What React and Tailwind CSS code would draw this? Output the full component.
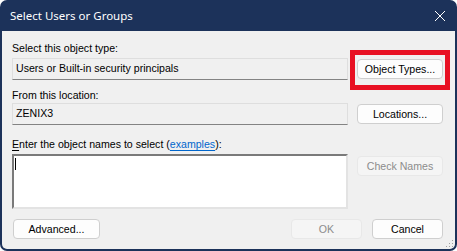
import React from "react";

const sans = '"Liberation Sans", Arial, sans-serif';

const btn =
  "h-[20px] rounded-[4px] border border-[#cfcfcf] bg-[#fdfdfd] text-[10.6px] leading-none text-black flex items-center justify-center";
const btnDisabled =
  "h-[20px] rounded-[4px] border border-[#e8e8e8] bg-[#f5f5f5] text-[10.6px] leading-none text-[#8c8c8c] flex items-center justify-center";
const roBox =
  "h-[22px] border border-[#dedede] border-b-[#838383] bg-[#f0f0f0] flex items-center pl-[3px] text-[10.6px] text-black";

export default function App() {
  return (
    <div className="w-[457px] h-[251px] bg-white">
      <div className="relative w-[457px] h-[251px] flex flex-col rounded-[7px] overflow-hidden bg-[#1c325a] p-[2px] pt-0 pb-[2px]">
        {/* title bar */}
        <div className="h-[31px] shrink-0 flex items-center justify-between pl-[8px] pr-[9px]">
          <span
            className="text-white text-[11.5px] leading-none"
            style={{ fontFamily: '"Noto Sans", "Open Sans", sans-serif' }}
          >
            Select Users or Groups
          </span>
          <svg width="12" height="12" viewBox="0 0 12 12">
            <path d="M1 1 L11 11 M11 1 L1 11" stroke="#ffffff" strokeWidth="1" />
          </svg>
        </div>
        {/* body */}
        <div
          className="relative flex-1 bg-[#f0f0f0] rounded-b-[5px] pl-[10px] pr-[12px] pt-[10px] text-[10.6px] text-black"
          style={{ fontFamily: sans }}
        >
          <div className="h-[14px] leading-[14px]">Select this object type:</div>
          <div className="mt-[3px] grid grid-cols-[336px_86px] gap-x-[9px] items-center">
            <div className={roBox}>Users or Built-in security principals</div>
            <div className={btn}>Object Types...</div>
          </div>
          <div className="mt-[8px] h-[14px] leading-[14px]">From this location:</div>
          <div className="mt-[1px] grid grid-cols-[336px_86px] gap-x-[9px] items-center">
            <div className={roBox}>ZENIX3</div>
            <div className={btn}>Locations...</div>
          </div>
          <div className="mt-[12px] h-[14px] leading-[14px]">
            <span className="underline underline-offset-[1.5px]">E</span>nter the object names to select (
            <span className="text-[#0066cc] underline underline-offset-[1.5px]">examples</span>):
          </div>
          <div className="mt-[3px] grid grid-cols-[336px_86px] gap-x-[9px] items-start">
            <div className="h-[55px] border-2 border-t-[#7a7a7a] border-l-[#7a7a7a] border-r-[#e3e3e3] border-b-[#e3e3e3] bg-white pl-[1px] pt-[2px]">
              <div className="w-[1px] h-[12px] bg-black" />
            </div>
            <div className={btnDisabled + " mt-[2px]"}>Check Names</div>
          </div>
          <div className="mt-[10px] flex items-center">
            <div className={btn + " w-[87px] ml-[1px]"}>Advanced...</div>
            <div className="flex-1" />
            <div className={btnDisabled + " w-[71px]"}>OK</div>
            <div className={btn + " w-[71px] ml-[10px]"}>Cancel</div>
          </div>
          {/* gripper */}
          <svg className="absolute right-[1px] bottom-[1px]" width="8" height="8" viewBox="0 0 8 8">
            <rect x="6" y="0" width="1" height="1" fill="#a0a0a0" />
            <rect x="3" y="3" width="1" height="1" fill="#a0a0a0" />
            <rect x="6" y="3" width="1" height="1" fill="#a0a0a0" />
            <rect x="0" y="6" width="1" height="1" fill="#a0a0a0" />
            <rect x="3" y="6" width="1" height="1" fill="#a0a0a0" />
            <rect x="6" y="6" width="1" height="1" fill="#a0a0a0" />
          </svg>
        </div>
        {/* red highlight */}
        <div className="absolute left-[350px] top-[50px] w-[100px] h-[40px] border-[5px] border-[#e81123]" />
      </div>
    </div>
  );
}
